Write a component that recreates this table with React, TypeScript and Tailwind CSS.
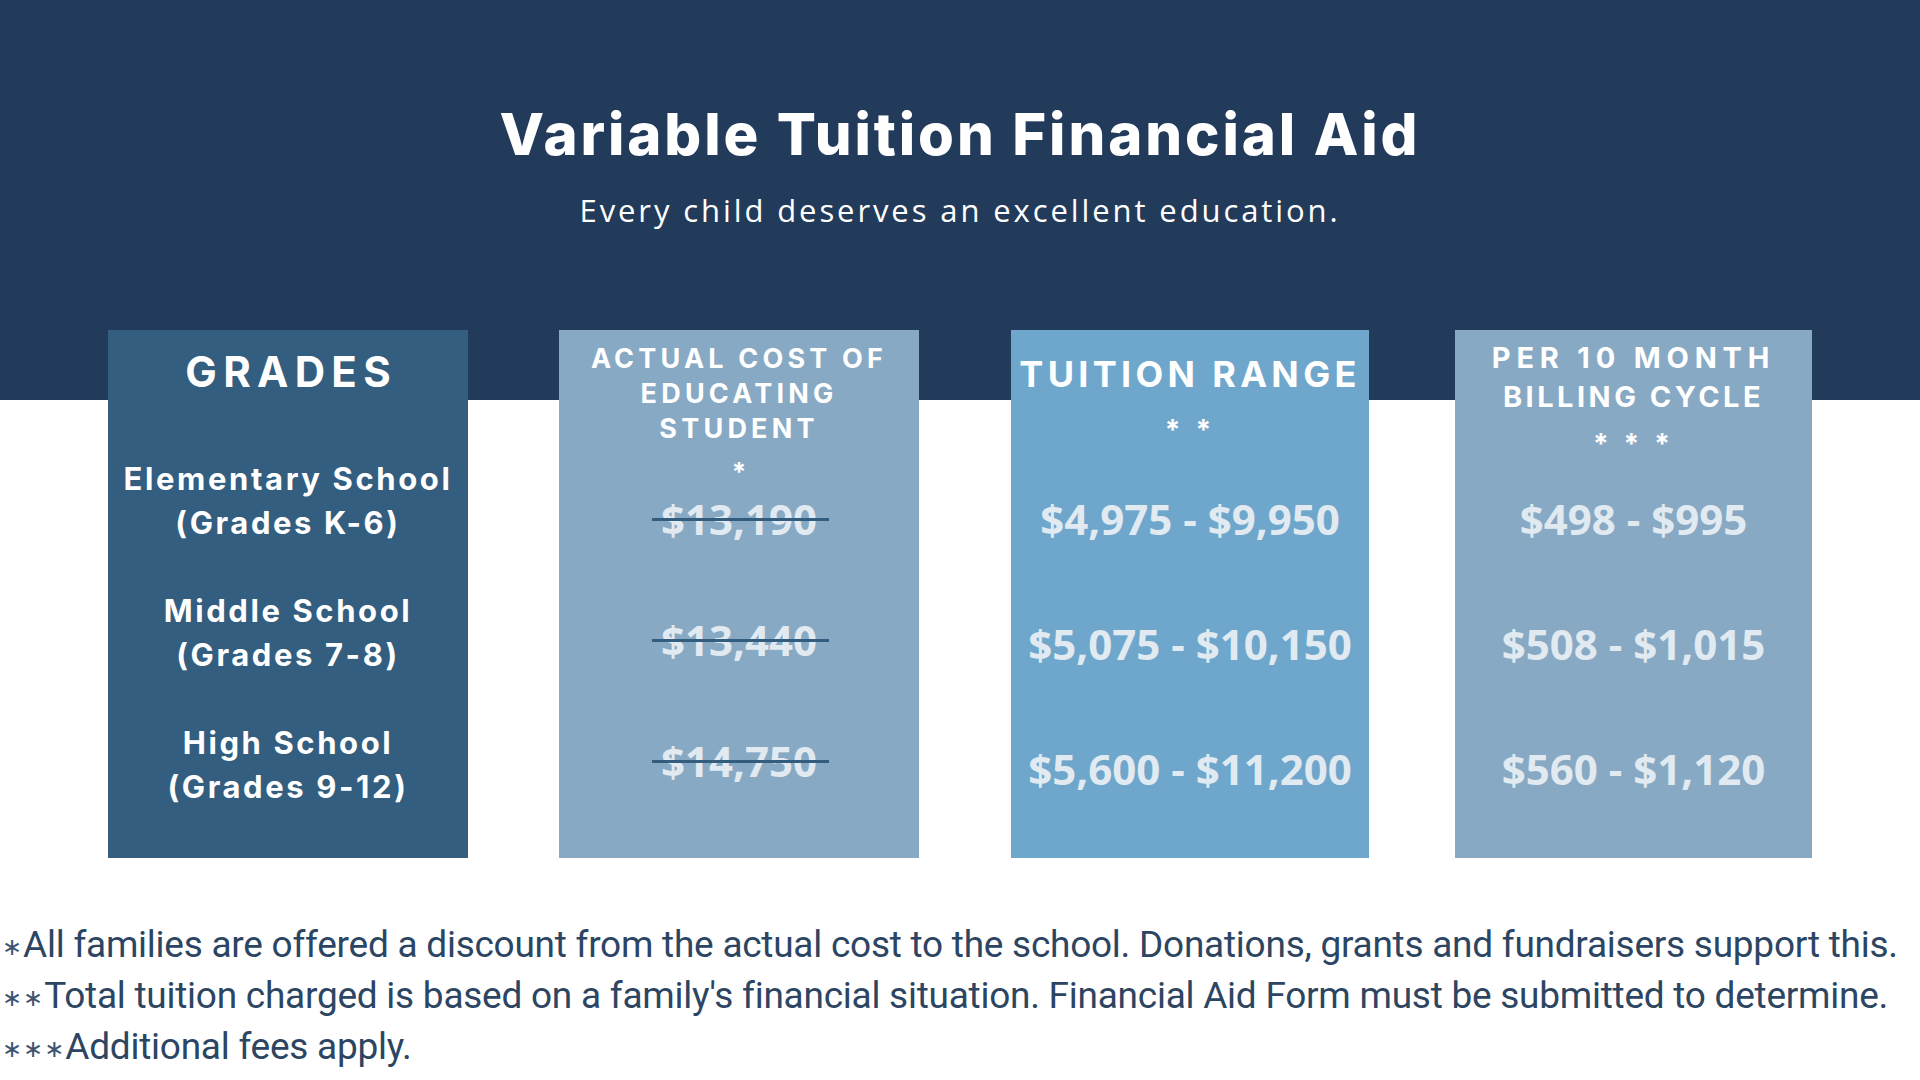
// App.tsx

const grades = [
  ["Elementary School", "(Grades K-6)"],
  ["Middle School", "(Grades 7-8)"],
  ["High School", "(Grades 9-12)"],
];

const costs = ["$13,190", "$13,440", "$14,750"];
const tuition = ["$4,975 - $9,950", "$5,075 - $10,150", "$5,600 - $11,200"];
const billing = ["$498 - $995", "$508 - $1,015", "$560 - $1,120"];

const notes = [
  ["∗", "All families are offered a discount from the actual cost to the school. Donations, grants and fundraisers support this."],
  ["∗∗", "Total tuition charged is based on a family's financial situation. Financial Aid Form must be submitted to determine."],
  ["∗∗∗", "Additional fees apply."],
];

const Price = ({ text, struck }: { text: string; struck?: boolean }) => (
  <div className="flex justify-center">
    <span className="relative font-['Open_Sans',sans-serif] font-bold text-[42px] leading-[42px] text-[#e2eaf1] whitespace-nowrap">
      {text}
      {struck && (
        <span className="absolute left-[-9px] right-[-12px] top-[20px] h-[3px] bg-[#335d7e]" />
      )}
    </span>
  </div>
);

export default function App() {
  return (
    <div className="w-[1920px] h-[1080px] bg-white overflow-hidden font-['Inter',sans-serif]">
      {/* Header band */}
      <header className="h-[400px] bg-[#223b5b] flex flex-col items-center pt-[105px]">
        <h1 className="text-[58px] leading-[58px] font-extrabold tracking-[2.9px] text-white">
          Variable Tuition Financial Aid
        </h1>
        <p className="mt-[32px] font-['Open_Sans',sans-serif] text-[31px] leading-[31px] tracking-[2.9px] text-white">
          Every child deserves an excellent education.
        </p>
      </header>

      {/* Cards */}
      <section className="-mt-[70px] pl-[108px] flex">
        {/* Grades */}
        <div className="w-[360px] h-[528px] bg-[#335e7f] flex flex-col items-center pt-[21px] text-white">
          <h2 className="text-[42px] leading-[42px] font-bold tracking-[0.15em] pl-[0.15em]">
            GRADES
          </h2>
          <div className="mt-[64px] flex flex-col gap-[44px]">
            {grades.map(([name, range]) => (
              <div key={name} className="text-center text-[31px] leading-[44px] font-bold tracking-[2.6px] whitespace-nowrap">
                <div>{name}</div>
                <div>{range}</div>
              </div>
            ))}
          </div>
        </div>

        {/* Actual cost */}
        <div className="ml-[91px] w-[360px] h-[528px] bg-[#88a9c4] flex flex-col">
          <div className="h-[168px] pt-[11px] flex flex-col items-center text-white font-bold text-[27px] leading-[35px] tracking-[0.155em] text-center">
            <div>ACTUAL COST OF</div>
            <div>EDUCATING</div>
            <div>STUDENT</div>
            <div className="mt-[13px] text-[26px] leading-[26px] tracking-normal">*</div>
          </div>
          <div className="flex flex-col gap-[79px]">
            {costs.map((c) => (
              <Price key={c} text={c} struck />
            ))}
          </div>
        </div>

        {/* Tuition range */}
        <div className="ml-[92px] w-[358px] h-[528px] bg-[#6fa7cc] flex flex-col">
          <div className="h-[168px] pt-[26px] flex flex-col items-center text-white font-bold text-[36px] leading-[36px] tracking-[0.12em] text-center">
            <div className="whitespace-nowrap">TUITION RANGE</div>
            <div className="mt-[24px] text-[28px] leading-[28px] tracking-[0.15em]">* *</div>
          </div>
          <div className="flex flex-col gap-[83px]">
            {tuition.map((t) => (
              <Price key={t} text={t} />
            ))}
          </div>
        </div>

        {/* Billing cycle */}
        <div className="ml-[86px] w-[357px] h-[528px] bg-[#88a9c4] flex flex-col">
          <div className="h-[168px] pt-[8px] flex flex-col items-center text-white font-bold text-[29px] leading-[39px] tracking-[0.12em] text-center">
            <div className="tracking-[0.2em]">PER 10 MONTH</div>
            <div>BILLING CYCLE</div>
            <div className="mt-[14px] text-[28px] leading-[28px] tracking-[0.15em]">* * *</div>
          </div>
          <div className="flex flex-col gap-[83px]">
            {billing.map((b) => (
              <Price key={b} text={b} />
            ))}
          </div>
        </div>
      </section>

      {/* Footnotes */}
      <footer className="mt-[61px] pl-[2px] font-['Roboto',sans-serif] text-[37px] leading-[51px] text-[#2c4562] tracking-[-0.25px]">
        {notes.map(([mark, text]) => (
          <p key={mark} className="whitespace-nowrap h-[51px]">
            <span className="inline-block align-middle font-['DejaVu_Sans',sans-serif] text-[24px] leading-none tracking-[1px] text-[#3d5470]">
              {mark}
            </span>
            {text}
          </p>
        ))}
      </footer>
    </div>
  );
}
